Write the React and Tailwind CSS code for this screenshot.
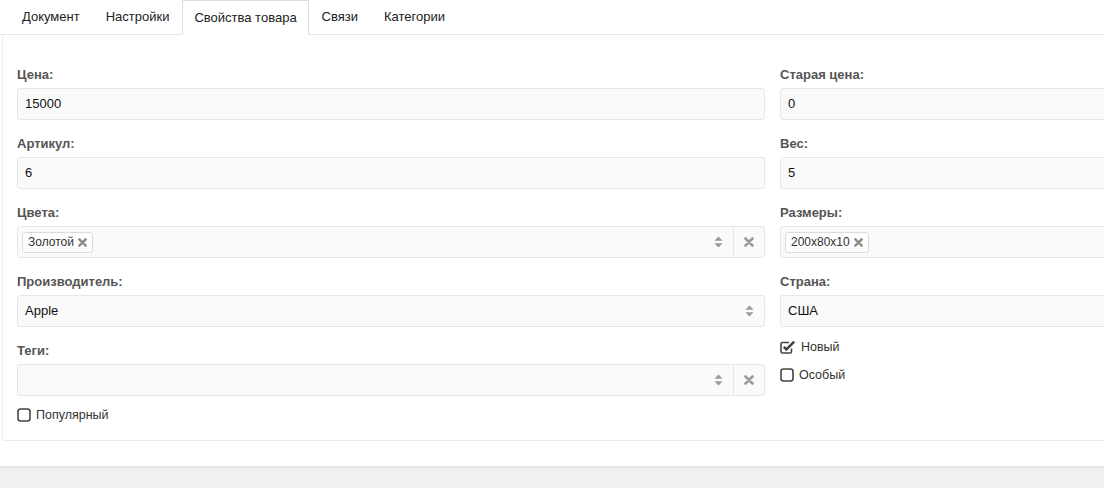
import React from "react"

const tabs = ["Документ", "Настройки", "Свойства товара", "Связи", "Категории"]

const SortIcon = () => (
  <svg width="9" height="12" viewBox="0 0 9 12" className="shrink-0">
    <path d="M4.5 0.5 L8.5 4.8 L0.5 4.8 Z" fill="#999" />
    <path d="M4.5 11.5 L8.5 7.2 L0.5 7.2 Z" fill="#999" />
  </svg>
)

const TimesIcon = ({ size = 10, color = "#999" }) => (
  <svg width={size} height={size} viewBox="0 0 10 10" className="shrink-0">
    <path d="M1.5 1.5 L8.5 8.5 M8.5 1.5 L1.5 8.5" stroke={color} strokeWidth="2.6" strokeLinecap="round" />
  </svg>
)

const Square = () => (
  <svg width="14" height="14" viewBox="0 0 14 14" className="shrink-0">
    <rect x="1" y="1" width="12" height="12" rx="2.5" fill="none" stroke="#444" strokeWidth="1.6" />
  </svg>
)

const CheckSquare = () => (
  <svg width="16" height="15" viewBox="0 0 16 15" className="shrink-0">
    <path d="M11.5 8.5 V11.5 Q11.5 13 10 13 H2.5 Q1 13 1 11.5 V4 Q1 2.5 2.5 2.5 H9" fill="none" stroke="#444" strokeWidth="1.6" />
    <path d="M3.8 6.8 L6.4 9.4 L14.2 1.6" fill="none" stroke="#444" strokeWidth="2.6" />
  </svg>
)

const Label = ({ children }) => (
  <div className="h-[18px] leading-[18px] mb-[4px] text-[13px] font-bold text-[#555]">{children}</div>
)

const Input = ({ value }) => (
  <div className="h-[32px] border border-[#e6e6e6] bg-[#fafafa] rounded-[3px] px-[7px] flex items-center text-[13px] text-[#111]">
    {value}
  </div>
)

const Tag = ({ text }) => (
  <div className="h-[21px] border border-[#dcdcdc] bg-[#fdfdfd] rounded-[3px] pl-[5px] pr-[5px] flex items-center gap-[4px] text-[12px] text-[#333]">
    {text}
    <TimesIcon size={9} color="#888" />
  </div>
)

const Select = ({ tag, value, clear }) => (
  <div className="h-[32px] border border-[#e6e6e6] bg-[#fafafa] rounded-[3px] flex items-center text-[13px] text-[#111]">
    <div className="flex-1 flex items-center pl-[4px]">
      {tag && <Tag text={tag} />}
      {value && <span className="pl-[3px]">{value}</span>}
    </div>
    <div className="w-[30px] flex justify-center"><SortIcon /></div>
    {clear && (
      <div className="w-[31px] h-full border-l border-[#e6e6e6] flex items-center justify-center">
        <TimesIcon />
      </div>
    )}
  </div>
)

const Field = ({ label, children }) => (
  <div className="mb-[15px]">
    <Label>{label}</Label>
    {children}
  </div>
)

const Check = ({ checked, text }) => (
  <div className="h-[18px] flex items-center gap-[5px] text-[12.5px] text-[#333]">
    {checked ? <CheckSquare /> : <Square />}
    <span>{text}</span>
  </div>
)

function App() {
  return (
    <div className="w-[1104px] h-[488px] overflow-hidden bg-[#f0f0f0]" style={{ fontFamily: '"Liberation Sans", Arial, sans-serif' }}>
      <div className="w-[1545px] bg-white pb-[25px] shadow-[0_1px_3px_rgba(0,0,0,0.08)]">
        <div className="h-[35px] flex pl-[9px] border-b border-[#e6e6e6] text-[13px] text-[#222]">
          {tabs.map((t) => (
            <div
              key={t}
              className={
                t === "Свойства товара"
                  ? "px-[11px] border border-[#dcdcdc] border-b-white bg-white -mb-[1px] flex items-center"
                  : "px-[12px] border border-transparent flex items-center"
              }
            >
              {t}
            </div>
          ))}
        </div>

        <div className="ml-[2px] w-[1543px] border-l border-b border-[#ececec] pt-[31px] pb-[16px] px-[14px]">
          <div className="grid grid-cols-[748px_748px] gap-x-[15px]">
            <div>
              <Field label="Цена:"><Input value="15000" /></Field>
              <Field label="Артикул:"><Input value="6" /></Field>
              <Field label="Цвета:"><Select tag="Золотой" clear /></Field>
              <Field label="Производитель:"><Select value="Apple" /></Field>
              <div>
                <Label>Теги:</Label>
                <Select clear />
              </div>
              <div className="mt-[10px]">
                <Check text="Популярный" />
              </div>
            </div>
            <div>
              <Field label="Старая цена:"><Input value="0" /></Field>
              <Field label="Вес:"><Input value="5" /></Field>
              <Field label="Размеры:"><Select tag="200x80x10" /></Field>
              <div>
                <Label>Страна:</Label>
                <Input value="США" />
              </div>
              <div className="mt-[11px] flex flex-col gap-[10px]">
                <Check checked text="Новый" />
                <Check text="Особый" />
              </div>
            </div>
          </div>
        </div>
      </div>
    </div>
  )
}

export default App
